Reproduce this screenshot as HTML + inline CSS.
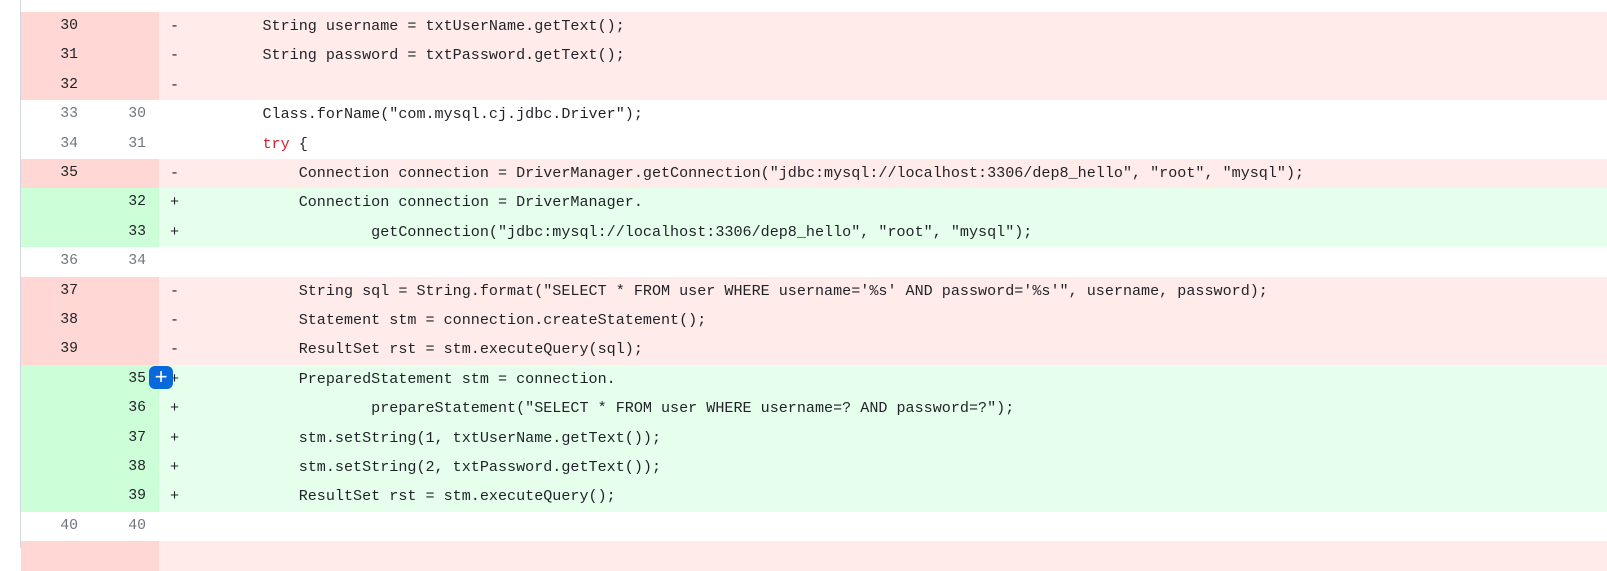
<!DOCTYPE html>
<html><head><meta charset="utf-8"><style>
body{margin:0;width:1607px;height:548px;overflow:hidden;background:#fff;position:relative;font-family:"Liberation Mono",monospace;font-size:15.1px;color:#1f2328}
.bl{position:absolute;left:20px;top:0;width:1px;height:548px;background:#d0d7de}
.r{position:absolute;left:21px;right:0;height:29.4px;line-height:29.4px;white-space:pre}
.o,.n{position:absolute;top:0;height:100%;text-align:right;color:#6e7781;font-size:14.8px}
.o{left:0;width:57px}
.n{left:69px;width:56px}
.g{position:absolute;left:0;width:138px;height:100%}
.s{position:absolute;left:149px}
.c{position:absolute;left:169px}
.d{background:#ffebe9}.d .g{background:#ffd7d5}
.a{background:#e6ffec}.a .g{background:#ccffd8}
.d .o,.d .n,.a .o,.a .n{color:#1f2328}
.k{color:#cf222e}
.btn{position:absolute;left:149px;top:366px;width:24px;height:23px;border-radius:6px;background:#0969da;color:#fff;font-family:"Liberation Sans",sans-serif;font-size:22px;line-height:22px;text-align:center}
</style></head><body>
<div class="bl"></div>
<div class="r" style="top:-17.4px"><div class="g"></div><span class="o">29</span><span class="n">29</span></div>
<div class="r d" style="top:12px"><div class="g"></div><span class="o">30</span><span class="s">-</span><span class="c">        String username = txtUserName.getText();</span></div>
<div class="r d" style="top:41.4px"><div class="g"></div><span class="o">31</span><span class="s">-</span><span class="c">        String password = txtPassword.getText();</span></div>
<div class="r d" style="top:70.8px"><div class="g"></div><span class="o">32</span><span class="s">-</span></div>
<div class="r" style="top:100.2px"><div class="g"></div><span class="o">33</span><span class="n">30</span><span class="c">        Class.forName("com.mysql.cj.jdbc.Driver");</span></div>
<div class="r" style="top:129.6px"><div class="g"></div><span class="o">34</span><span class="n">31</span><span class="c">        <span class="k">try</span> {</span></div>
<div class="r d" style="top:159px"><div class="g"></div><span class="o">35</span><span class="s">-</span><span class="c">            Connection connection = DriverManager.getConnection("jdbc:mysql://localhost:3306/dep8_hello", "root", "mysql");</span></div>
<div class="r a" style="top:188.4px"><div class="g"></div><span class="n">32</span><span class="s">+</span><span class="c">            Connection connection = DriverManager.</span></div>
<div class="r a" style="top:217.8px"><div class="g"></div><span class="n">33</span><span class="s">+</span><span class="c">                    getConnection("jdbc:mysql://localhost:3306/dep8_hello", "root", "mysql");</span></div>
<div class="r" style="top:247.2px"><div class="g"></div><span class="o">36</span><span class="n">34</span></div>
<div class="r d" style="top:276.6px"><div class="g"></div><span class="o">37</span><span class="s">-</span><span class="c">            String sql = String.format("SELECT * FROM user WHERE username='%s' AND password='%s'", username, password);</span></div>
<div class="r d" style="top:306px"><div class="g"></div><span class="o">38</span><span class="s">-</span><span class="c">            Statement stm = connection.createStatement();</span></div>
<div class="r d" style="top:335.4px"><div class="g"></div><span class="o">39</span><span class="s">-</span><span class="c">            ResultSet rst = stm.executeQuery(sql);</span></div>
<div class="r a" style="top:364.8px"><div class="g"></div><span class="n">35</span><span class="s">+</span><span class="c">            PreparedStatement stm = connection.</span></div>
<div class="r a" style="top:394.2px"><div class="g"></div><span class="n">36</span><span class="s">+</span><span class="c">                    prepareStatement("SELECT * FROM user WHERE username=? AND password=?");</span></div>
<div class="r a" style="top:423.6px"><div class="g"></div><span class="n">37</span><span class="s">+</span><span class="c">            stm.setString(1, txtUserName.getText());</span></div>
<div class="r a" style="top:453px"><div class="g"></div><span class="n">38</span><span class="s">+</span><span class="c">            stm.setString(2, txtPassword.getText());</span></div>
<div class="r a" style="top:482.4px"><div class="g"></div><span class="n">39</span><span class="s">+</span><span class="c">            ResultSet rst = stm.executeQuery();</span></div>
<div class="r" style="top:511.8px"><div class="g"></div><span class="o">40</span><span class="n">40</span></div>
<div class="r d" style="top:541.2px"><div class="g"></div></div>
<div class="btn">+</div>
</body></html>
